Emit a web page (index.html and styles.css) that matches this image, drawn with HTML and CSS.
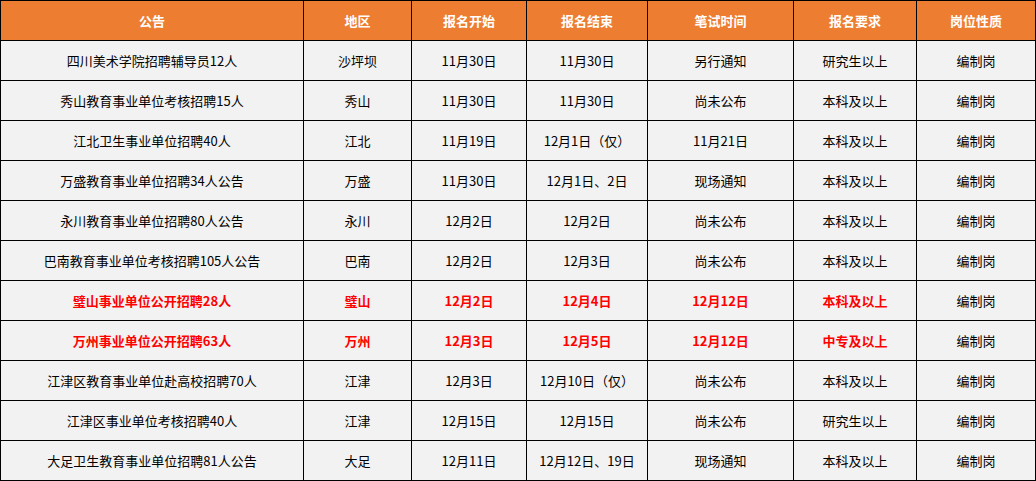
FILE: index.html
```html
<!DOCTYPE html>
<html lang="zh-CN">
<head>
<meta charset="utf-8">
<title>招聘公告</title>
<link rel="stylesheet" href="styles.css">
</head>
<body>
<div class="grid">
  <div class="c h">公告</div><div class="c h">地区</div><div class="c h">报名开始</div><div class="c h">报名结束</div><div class="c h">笔试时间</div><div class="c h">报名要求</div><div class="c h">岗位性质</div>

  <div class="c">四川美术学院招聘辅导员12人</div><div class="c">沙坪坝</div><div class="c">11月30日</div><div class="c">11月30日</div><div class="c">另行通知</div><div class="c">研究生以上</div><div class="c">编制岗</div>

  <div class="c">秀山教育事业单位考核招聘15人</div><div class="c">秀山</div><div class="c">11月30日</div><div class="c">11月30日</div><div class="c">尚未公布</div><div class="c">本科及以上</div><div class="c">编制岗</div>

  <div class="c">江北卫生事业单位招聘40人</div><div class="c">江北</div><div class="c">11月19日</div><div class="c">12月1日（仅）</div><div class="c">11月21日</div><div class="c">本科及以上</div><div class="c">编制岗</div>

  <div class="c">万盛教育事业单位招聘34人公告</div><div class="c">万盛</div><div class="c">11月30日</div><div class="c">12月1日、2日</div><div class="c">现场通知</div><div class="c">本科及以上</div><div class="c">编制岗</div>

  <div class="c">永川教育事业单位招聘80人公告</div><div class="c">永川</div><div class="c">12月2日</div><div class="c">12月2日</div><div class="c">尚未公布</div><div class="c">本科及以上</div><div class="c">编制岗</div>

  <div class="c">巴南教育事业单位考核招聘105人公告</div><div class="c">巴南</div><div class="c">12月2日</div><div class="c">12月3日</div><div class="c">尚未公布</div><div class="c">本科及以上</div><div class="c">编制岗</div>

  <div class="c hot">璧山事业单位公开招聘28人</div><div class="c hot">璧山</div><div class="c hot">12月2日</div><div class="c hot">12月4日</div><div class="c hot">12月12日</div><div class="c hot">本科及以上</div><div class="c">编制岗</div>

  <div class="c hot">万州事业单位公开招聘63人</div><div class="c hot">万州</div><div class="c hot">12月3日</div><div class="c hot">12月5日</div><div class="c hot">12月12日</div><div class="c hot">中专及以上</div><div class="c">编制岗</div>

  <div class="c">江津区教育事业单位赴高校招聘70人</div><div class="c">江津</div><div class="c">12月3日</div><div class="c">12月10日（仅）</div><div class="c">尚未公布</div><div class="c">本科及以上</div><div class="c">编制岗</div>

  <div class="c">江津区事业单位考核招聘40人</div><div class="c">江津</div><div class="c">12月15日</div><div class="c">12月15日</div><div class="c">尚未公布</div><div class="c">研究生以上</div><div class="c">编制岗</div>

  <div class="c">大足卫生教育事业单位招聘81人公告</div><div class="c">大足</div><div class="c">12月11日</div><div class="c">12月12日、19日</div><div class="c">现场通知</div><div class="c">本科及以上</div><div class="c">编制岗</div>
</div>
</body>
</html>
```

FILE: styles.css
```css
html, body {
  margin: 0;
  padding: 0;
  background: #ffffff;
}

body {
  font-family: "Noto Sans CJK SC", "Noto Sans", sans-serif;
  font-size: 13px;
  color: #000;
}

.grid {
  display: grid;
  grid-template-columns: 303px 108px 115px 121px 146px 123px 119px;
  grid-auto-rows: 40px;
  width: 1035px;
  border-left: 1px solid #000;
  border-top: 1px solid #000;
}

.c {
  box-sizing: border-box;
  border-right: 1px solid #000;
  border-bottom: 1px solid #000;
  background: #f2f2f2;
  display: flex;
  align-items: center;
  justify-content: center;
  white-space: nowrap;
  line-height: 1;
}

.h {
  background: #ed7d31;
  color: #ffffff;
  font-weight: bold;
}

.hot {
  color: #ff0000;
  font-weight: bold;
}
```
